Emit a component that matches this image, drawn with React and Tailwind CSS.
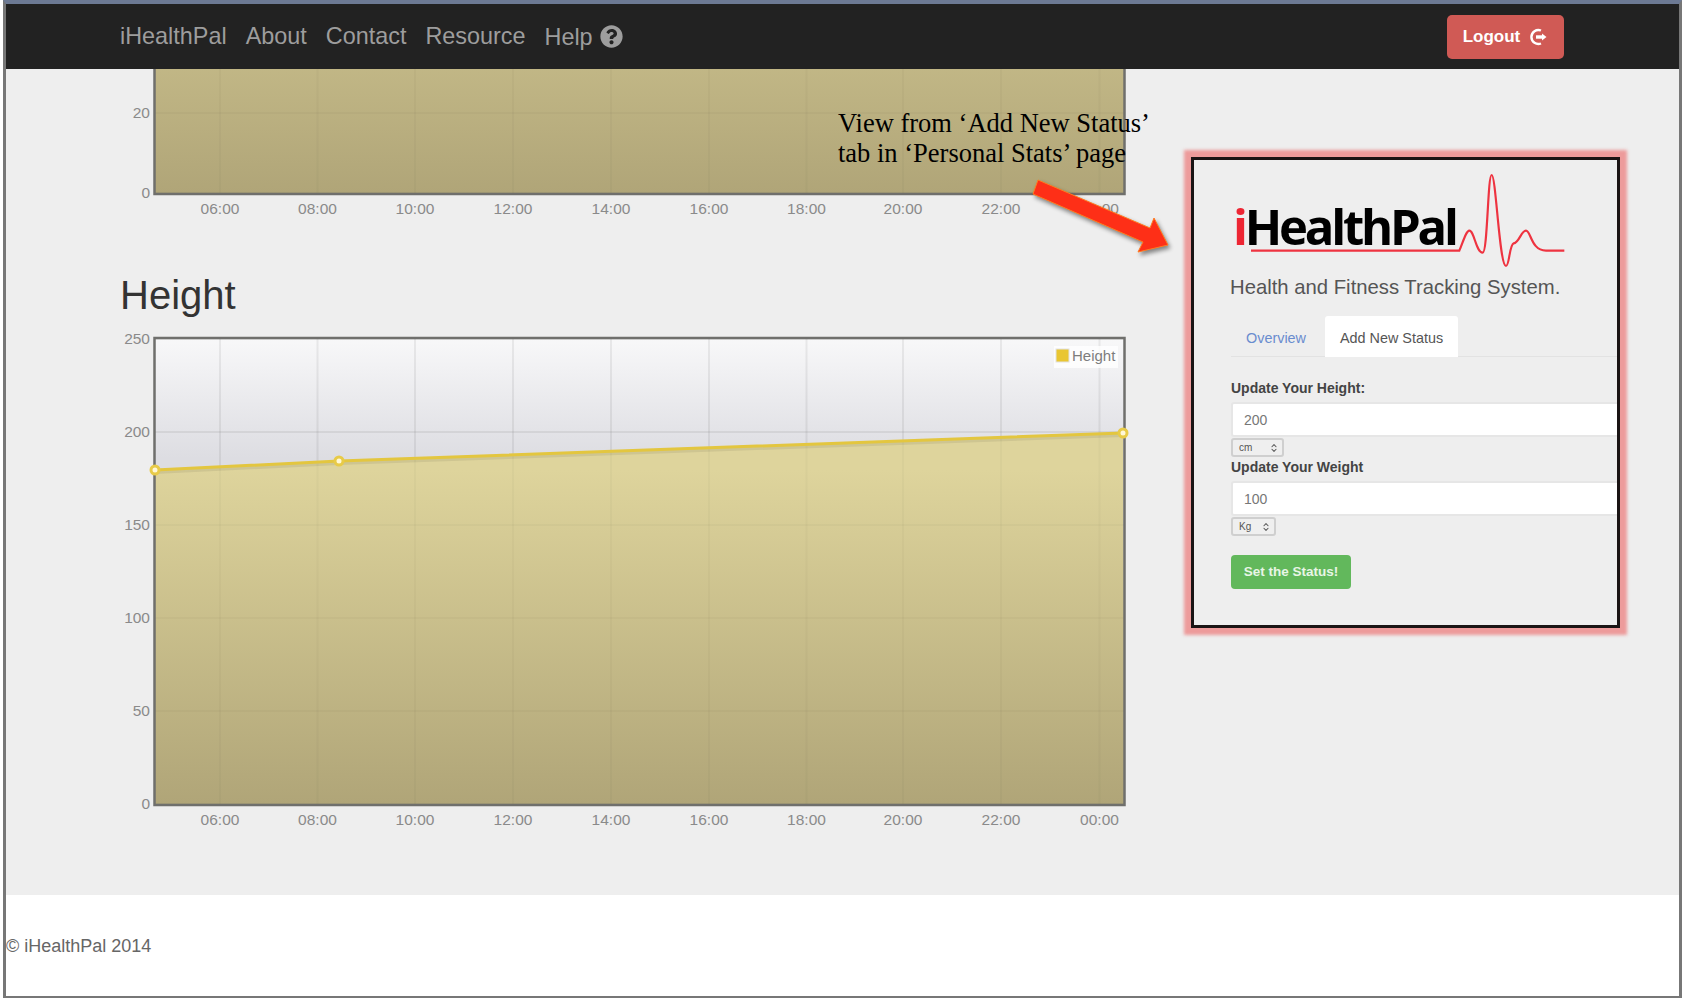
import { FaQuestionCircle } from "react-icons/fa";
import { ChevronsUpDown } from "lucide-react";

const hours = [
  ["06:00", 100],
  ["08:00", 197.5],
  ["10:00", 295],
  ["12:00", 393],
  ["14:00", 491],
  ["16:00", 589],
  ["18:00", 686.5],
  ["20:00", 783],
  ["22:00", 881],
  ["00:00", 979.5],
];

const PLOT_LEFT = 34;
const PLOT_RIGHT = 1005;

function Chart({ id, height, plotTop, plotBottom, yTicks, points, legend }) {
  const fillTop = plotBottom - 334;
  const area = points
    ? `M${points.map((p) => p.join(" ")).join(" L")} L${PLOT_RIGHT} ${plotBottom} L${PLOT_LEFT} ${plotBottom} Z`
    : `M${PLOT_LEFT} ${plotTop} H${PLOT_RIGHT} V${plotBottom} H${PLOT_LEFT} Z`;
  const line = points && `M${points.map((p) => p.join(" ")).join(" L")}`;

  const grid = (opacity) => (
    <>
      {hours.map(([label, x]) => (
        <line key={label} x1={x} x2={x} y1={plotTop} y2={plotBottom} stroke="#000" strokeOpacity={opacity} strokeWidth="2" />
      ))}
      {yTicks.map(([label, y]) => (
        <line key={label} x1={PLOT_LEFT} x2={PLOT_RIGHT} y1={y} y2={y} stroke="#000" strokeOpacity={opacity} strokeWidth="2" />
      ))}
    </>
  );

  return (
    <svg width="1020" height={height} className="block shrink-0">
      <defs>
        <linearGradient id={`${id}-bg`} x1="0" y1={plotTop} x2="0" y2={plotTop + 120} gradientUnits="userSpaceOnUse">
          <stop offset="0" stopColor="#f8f8f9" />
          <stop offset="1" stopColor="#dddde2" />
        </linearGradient>
        <linearGradient id={`${id}-fill`} x1="0" y1={fillTop} x2="0" y2={plotBottom} gradientUnits="userSpaceOnUse">
          <stop offset="0" stopColor="#ded49c" />
          <stop offset="1" stopColor="#b0a578" />
        </linearGradient>
      </defs>
      <rect x={PLOT_LEFT} y={plotTop} width={PLOT_RIGHT - PLOT_LEFT} height={plotBottom - plotTop} fill={`url(#${id}-bg)`} />
      {grid(0.04)}
      <path d={area} fill={`url(#${id}-fill)`} />
      {grid(0.025)}
      {yTicks.map(([label, y]) => (
        <text key={label} x="30" y={y + 5} textAnchor="end" fontSize="15.5" fill="#8a8a8a">{label}</text>
      ))}
      {hours.map(([label, x]) => (
        <text key={label} x={x} y={plotBottom + 21} textAnchor="middle" fontSize="15.5" fill="#8a8a8a">{label}</text>
      ))}
      {line && (
        <>
          <path d={line} transform="translate(0 2)" fill="none" stroke="#000" strokeOpacity="0.07" strokeWidth="4" />
          <path d={line} fill="none" stroke="#e3c63f" strokeWidth="3" />
        </>
      )}
      <rect
        x={PLOT_LEFT + 0.5}
        y={plotTop}
        width={PLOT_RIGHT - PLOT_LEFT - 1}
        height={plotBottom - plotTop + 1}
        fill="none"
        stroke="#6f6f6c"
        strokeWidth="2.5"
      />
      {points &&
        points.map(([x, y]) => (
          <circle key={x} cx={x} cy={y} r="4" fill="#fff8d8" stroke="#e8cb48" strokeWidth="3" />
        ))}
      {legend && (
        <g>
          <rect x={934} y={plotTop + 8} width={64} height={22} fill="#fff" fillOpacity="0.8" />
          <rect x={936} y={plotTop + 11} width={13} height={13} fill="#e9c632" stroke="#e2e2e2" />
          <text x={952} y={plotTop + 23} fontSize="15" fill="#7d7d7d">{legend}</text>
        </g>
      )}
    </svg>
  );
}

function UnitSelect({ value, width }) {
  return (
    <div className={`relative flex h-[19px] items-center rounded-[3px] border-2 border-[#cfcfcf] bg-[#efefef] pl-[6px] text-[10px] text-[#555] ${width}`}>
      {value}
      <ChevronsUpDown className="absolute right-[3px] size-[10px] text-[#555]" strokeWidth={2.5} />
    </div>
  );
}

function Field({ label, value, unit, unitWidth }) {
  return (
    <div>
      <div className="h-[18px] text-[14px] leading-[18px] font-bold text-[#444]">{label}</div>
      <input
        readOnly
        value={value}
        className="mt-[5px] block h-[35px] w-[420px] rounded-l-[3px] border-2 border-[#e6e6e6] bg-white pl-[11px] text-[14px] text-[#777] outline-none"
      />
      <div className="mt-[1px]">
        <UnitSelect value={unit} width={unitWidth} />
      </div>
    </div>
  );
}

function StatusPanel() {
  return (
    <div className="absolute left-[1185px] top-[88px] h-[471px] w-[429px] overflow-hidden border-[3px] border-[#1a1414] bg-[#eeeeee] shadow-[0_0_3px_7px_rgba(236,140,140,0.85)]">
      <div className="relative h-[156px] pl-[37px]">
        <div className="absolute left-[39px] top-[33px] font-['Open_Sans',sans-serif] text-[49px] leading-[66px] font-bold tracking-[-3.2px] text-black">
          <span className="text-[#ed2533]">i</span>HealthPal
        </div>
        <svg viewBox="0 0 1080 630" width="360" height="210" className="absolute left-[27px] top-0">
          <path
            d="M90 272 H715 C725 250 735 212 745 212 C760 212 765 278 785 278 C800 278 800 45 812 45 C825 45 835 318 855 318 C865 318 865 255 878 250 C895 248 900 212 915 212 C930 212 930 272 975 272 H1030"
            fill="none"
            stroke="#ee3340"
            strokeWidth="6.5"
          />
        </svg>
        <p className="absolute left-[36px] top-[113px] whitespace-nowrap text-[20.3px] leading-[28px] text-[#555]">
          Health and Fitness Tracking System.
        </p>
      </div>
      <div className="ml-[37px] flex h-[41px] border-b border-[#e2e2e2] text-[14.4px]">
        <span className="ml-[15px] mt-[12px] text-[#6a8ccf]">Overview</span>
        <span className="ml-[19px] h-[41px] rounded-t-[3px] bg-white px-[15px] pt-[12px] text-[#555]">Add New Status</span>
      </div>
      <div className="ml-[37px] mt-[22px] flex flex-col gap-[1px]">
        <Field label="Update Your Height:" value="200" unit="cm" unitWidth="w-[53px]" />
        <Field label="Update Your Weight" value="100" unit="Kg" unitWidth="w-[45px]" />
      </div>
      <button className="ml-[37px] mt-[19px] h-[34px] w-[120px] rounded-[4px] bg-[#62b85c] text-[13.5px] font-bold text-[#e8f5e6]">
        Set the Status!
      </button>
    </div>
  );
}

function Arrow() {
  return (
    <svg width="150" height="90" className="absolute left-[1020px] top-[105px] drop-shadow-[2px_3px_2px_rgba(0,0,0,0.45)]">
      <path
        d="M12 6 L124 54 L128 44 L142 71 L112 78 L117 68 L7 20 Z"
        fill="#fe2f17"
        stroke="#ff7a1f"
        strokeWidth="1"
        strokeLinejoin="round"
      />
    </svg>
  );
}

export default function App() {
  return (
    <div className="ml-[3px] flex h-[998px] w-[1679px] flex-col overflow-hidden border-x-[3px] border-b-2 border-t-[4px] border-x-[#777] border-b-[#777] border-t-[#6d7a94] bg-white font-['Liberation_Sans',sans-serif]">
      <nav className="flex h-[65px] shrink-0 items-center bg-[#222222] pl-[114px] pr-[115px] text-[23.4px] text-[#9d9d9d]">
        <div className="flex items-center gap-[19px]">
          <span>iHealthPal</span>
          <span>About</span>
          <span>Contact</span>
          <span>Resource</span>
          <span className="flex items-center gap-[7px]">
            <span className="mt-[3px]">Help</span>
            <FaQuestionCircle className="size-[23px]" />
          </span>
        </div>
        <button className="ml-auto flex h-[44px] w-[117px] items-center justify-center gap-[8px] rounded-[5px] bg-[#d05a55] text-[17px] font-bold text-white">
          Logout
          <svg viewBox="0 0 20 20" className="size-[20px]" fill="none" stroke="#fff" strokeWidth="2.4">
            <path d="M13 3.5 A7 7 0 1 0 13 16.5" />
            <path d="M8 10 H16" strokeWidth="3.4" />
            <path d="M14 6.5 L18.5 10 L14 13.5 Z" fill="#fff" strokeWidth="0" />
          </svg>
        </button>
      </nav>

      <main className="relative flex h-[826px] shrink-0 flex-col overflow-hidden bg-[#eeeeee] pl-[114px]">
        <Chart id="top" height={150} plotTop={-100} plotBottom={124} yTicks={[["20", 44], ["0", 124]]} />
        <h2 className="mt-[54px] h-[44px] text-[40px] leading-[44px] text-[#333]">Height</h2>
        <div className="mt-[13px]">
          <Chart
            id="height"
            height={505}
            plotTop={8}
            plotBottom={474}
            yTicks={[["250", 9], ["200", 102], ["150", 195], ["100", 288], ["50", 381], ["0", 474]]}
            points={[[35, 140], [219, 131], [1003, 103]]}
            legend="Height"
          />
        </div>

        <div className="absolute left-[832px] top-[39px] whitespace-nowrap font-['Liberation_Serif',serif] text-[26.5px] leading-[30px] text-black">
          <div>View from ‘Add New Status’</div>
          <div>tab in ‘Personal Stats’ page</div>
        </div>
        <Arrow />
        <StatusPanel />
      </main>

      <footer className="flex-1 bg-white pt-[39px] text-[18px] leading-[24px] text-[#666]">
        © iHealthPal 2014
      </footer>
    </div>
  );
}
